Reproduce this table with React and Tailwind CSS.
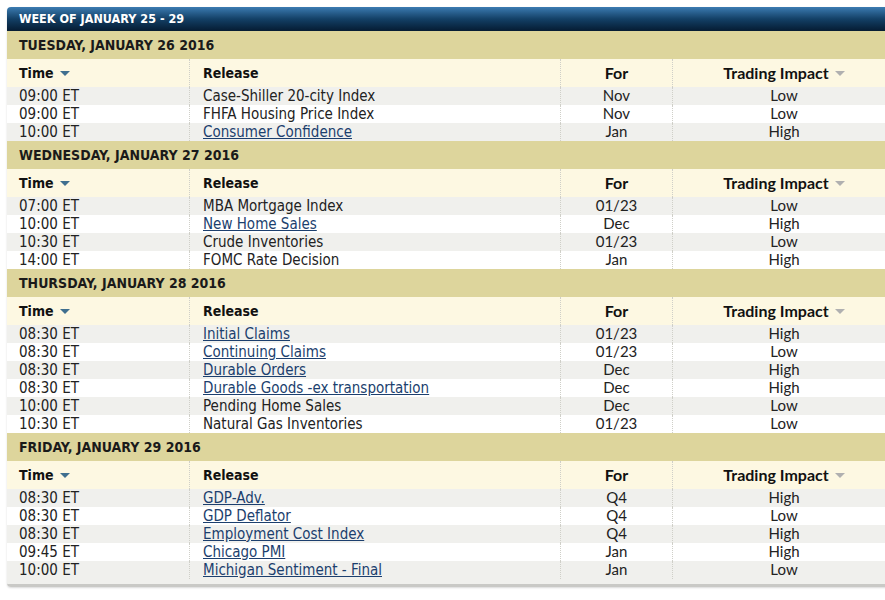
import React from 'react';

const days = [
  {
    title: 'TUESDAY, JANUARY 26 2016',
    rows: [
      ['09:00 ET', 'Case-Shiller 20-city Index', false, 'Nov', 'Low'],
      ['09:00 ET', 'FHFA Housing Price Index', false, 'Nov', 'Low'],
      ['10:00 ET', 'Consumer Confidence', true, 'Jan', 'High'],
    ],
  },
  {
    title: 'WEDNESDAY, JANUARY 27 2016',
    rows: [
      ['07:00 ET', 'MBA Mortgage Index', false, '01/23', 'Low'],
      ['10:00 ET', 'New Home Sales', true, 'Dec', 'High'],
      ['10:30 ET', 'Crude Inventories', false, '01/23', 'Low'],
      ['14:00 ET', 'FOMC Rate Decision', false, 'Jan', 'High'],
    ],
  },
  {
    title: 'THURSDAY, JANUARY 28 2016',
    rows: [
      ['08:30 ET', 'Initial Claims', true, '01/23', 'High'],
      ['08:30 ET', 'Continuing Claims', true, '01/23', 'Low'],
      ['08:30 ET', 'Durable Orders', true, 'Dec', 'High'],
      ['08:30 ET', 'Durable Goods -ex transportation', true, 'Dec', 'High'],
      ['10:00 ET', 'Pending Home Sales', false, 'Dec', 'Low'],
      ['10:30 ET', 'Natural Gas Inventories', false, '01/23', 'Low'],
    ],
  },
  {
    title: 'FRIDAY, JANUARY 29 2016',
    rows: [
      ['08:30 ET', 'GDP-Adv.', true, 'Q4', 'High'],
      ['08:30 ET', 'GDP Deflator', true, 'Q4', 'Low'],
      ['08:30 ET', 'Employment Cost Index', true, 'Q4', 'High'],
      ['09:45 ET', 'Chicago PMI', true, 'Jan', 'High'],
      ['10:00 ET', 'Michigan Sentiment - Final', true, 'Jan', 'Low'],
    ],
  },
];

const tahoma = "font-['DejaVu_Sans_Condensed','DejaVu_Sans',sans-serif]";
const lato = "font-['Lato',sans-serif]";

const Arrow = ({ color }) => (
  <svg width="10" height="6" viewBox="0 0 10 6" className="ml-[6px] mt-[2px]">
    <path d="M0 0 L10 0 L5 5 Z" fill={color} />
  </svg>
);

const divider = 'border-l border-dotted border-[#cfcfc8]';

const ColHeader = () => (
  <div className="flex h-[28px] items-center bg-[#fdf8e2] text-[#111]">
    <div className={`w-[182px] h-full flex items-center pl-[12px] ${tahoma} font-bold text-[14px]`}>
      Time <Arrow color="#3f6f8f" />
    </div>
    <div className={`w-[371px] h-full flex items-center pl-[13px] ${divider} ${tahoma} font-bold text-[14px]`}>
      Release
    </div>
    <div className={`w-[112px] h-full flex items-center justify-center ${divider} ${lato} font-bold text-[16px]`}>
      For
    </div>
    <div className={`w-[223px] h-full flex items-center justify-center ${divider} ${lato} font-bold text-[16px]`}>
      Trading Impact <Arrow color="#b0b0b0" />
    </div>
  </div>
);

const Row = ({ row, i }) => {
  const [time, release, link, forVal, impact] = row;
  return (
    <div className={`flex h-[18px] items-center ${i % 2 === 0 ? 'bg-[#f0f0ed]' : 'bg-white'} text-[#222]`}>
      <div className={`w-[182px] h-full flex items-center pl-[12px] ${tahoma} text-[15px]`}>{time}</div>
      <div className={`w-[371px] h-full flex items-center pl-[13px] ${divider} ${tahoma} text-[15px]`}>
        {link ? <a className="text-[#1c3f6e] underline">{release}</a> : release}
      </div>
      <div className={`w-[112px] h-full flex items-center justify-center pb-[2px] ${divider} ${lato} text-[15px]`}>{forVal}</div>
      <div className={`w-[223px] h-full flex items-center justify-center pb-[2px] ${divider} ${lato} text-[15px]`}>{impact}</div>
    </div>
  );
};

export default function App() {
  return (
    <div className="w-[885px] h-[600px] overflow-hidden bg-white pt-[7px] pl-[7px]">
      <div className="w-[888px] rounded-tl-[4px] rounded-bl-[4px] overflow-hidden border-b-[3px] border-[#c9c9c6] shadow-[0_1px_2px_rgba(0,0,0,0.15)]">
        <div className={`h-[24px] flex items-center pl-[12px] bg-gradient-to-b from-[#3c7cb2] via-[#134066] to-[#061c33] text-white font-bold text-[12.5px] ${tahoma}`}>
          WEEK OF JANUARY 25 - 29
        </div>
        {days.map((d) => (
          <div key={d.title}>
            <div className={`h-[28px] flex items-center pl-[12px] bg-[#ddd59c] text-[#1a1a1a] font-bold text-[14px] ${tahoma}`}>
              {d.title}
            </div>
            <ColHeader />
            {d.rows.map((r, i) => (
              <Row key={i} row={r} i={i} />
            ))}
          </div>
        ))}
        <div className="h-[5px] bg-[#f0f0ed]" />
      </div>
    </div>
  );
}
